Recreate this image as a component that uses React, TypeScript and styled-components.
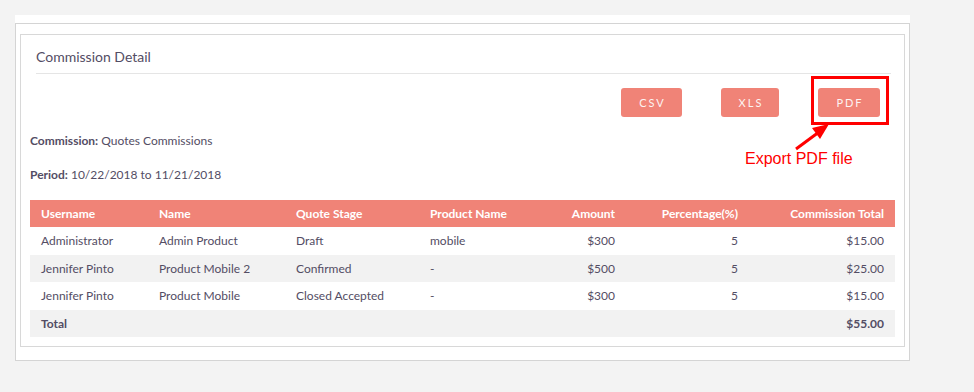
import styled, { createGlobalStyle } from 'styled-components';

const GlobalStyles = createGlobalStyle`
  html, body {
    margin: 0;
    padding: 0;
    background: #f3f3f3;
    font-family: Lato, "Open Sans", sans-serif;
    color: #534d64;
  }
`;

const Page = styled.div`
  padding: 15px 0 0 15px;
`;

const Sheet = styled.div`
  width: 895px;
  background: #fff;
  padding-top: 8px;
`;

const Outer = styled.div`
  border: 1px solid #d4d4d4;
  padding: 10px 4px 13px 4px;
`;

const Panel = styled.div`
  border: 1px solid #d8d8d8;
  padding: 0 8px 9px 9px;
  background: #fff;
`;

const Title = styled.h2`
  margin: 0 5px 0 6px;
  padding: 12px 0 6px;
  font-size: 14px;
  line-height: 20px;
  font-weight: 400;
  color: #534d64;
  border-bottom: 1px solid #e5e5e5;
`;

const Toolbar = styled.div`
  display: flex;
  justify-content: flex-end;
  gap: 39px;
  margin-top: 14px;
  padding-right: 16px;
`;

const ExportButton = styled.button<{ $w: number }>`
  position: relative;
  width: ${(p) => p.$w}px;
  height: 29px;
  border: none;
  border-radius: 3px;
  background: #f08377;
  color: #fdf3f2;
  font-family: Lato, sans-serif;
  font-size: 11px;
  font-weight: 400;
  letter-spacing: 2px;
  padding: 0 0 0 2px;
  cursor: pointer;
`;

const Highlight = styled.span`
  position: absolute;
  left: -7px;
  top: -12px;
  right: -9px;
  bottom: -8px;
  border: 3px solid #ff0000;
  pointer-events: none;
`;

const Callout = styled.div`
  position: absolute;
  left: -73px;
  top: 36px;
  width: 140px;
  height: 52px;
  pointer-events: none;
`;

const CalloutText = styled.span`
  position: absolute;
  left: 0;
  top: 26px;
  font-family: "Liberation Sans", Arial, sans-serif;
  font-size: 16px;
  letter-spacing: 0;
  color: #f00;
  white-space: nowrap;
`;

const Info = styled.p<{ $top: number }>`
  margin: ${(p) => p.$top}px 0 0;
  font-size: 12px;
  line-height: 20px;
  color: #534d64;
  b {
    font-weight: 700;
  }
`;

const Table = styled.table`
  width: 865px;
  margin-top: 15px;
  border-collapse: collapse;
  table-layout: fixed;
  font-size: 12px;
`;

const Th = styled.th<{ $right?: boolean }>`
  height: 27px;
  padding: 0 11px;
  background: #f08377;
  color: #fff;
  font-weight: 700;
  text-align: ${(p) => (p.$right ? 'right' : 'left')};
`;

const Row = styled.tr<{ $striped?: boolean }>`
  background: ${(p) => (p.$striped ? '#f2f2f2' : '#fff')};
`;

const Td = styled.td<{ $right?: boolean; $bold?: boolean }>`
  height: 27.5px;
  padding: 0 11px;
  color: #534d64;
  font-weight: ${(p) => (p.$bold ? 700 : 400)};
  text-align: ${(p) => (p.$right ? 'right' : 'left')};
  white-space: nowrap;
`;

const columns = [
  { label: 'Username', width: 118 },
  { label: 'Name', width: 137 },
  { label: 'Quote Stage', width: 134 },
  { label: 'Product Name', width: 107 },
  { label: 'Amount', width: 100, right: true },
  { label: 'Percentage(%)', width: 123, right: true },
  { label: 'Commission Total', width: 146, right: true },
];

const rows = [
  ['Administrator', 'Admin Product', 'Draft', 'mobile', '$300', '5', '$15.00'],
  ['Jennifer Pinto', 'Product Mobile 2', 'Confirmed', '-', '$500', '5', '$25.00'],
  ['Jennifer Pinto', 'Product Mobile', 'Closed Accepted', '-', '$300', '5', '$15.00'],
];

export default function App() {
  return (
    <>
      <GlobalStyles />
      <Page>
        <Sheet>
          <Outer>
            <Panel>
              <Title>Commission Detail</Title>
              <Toolbar>
                <ExportButton $w={61}>CSV</ExportButton>
                <ExportButton $w={58}>XLS</ExportButton>
                <ExportButton $w={62}>
                  PDF
                  <Highlight />
                  <Callout>
                    <svg width="140" height="30" viewBox="0 0 140 30" style={{ position: 'absolute', left: 0, top: 0 }}>
                      <line x1="51" y1="25" x2="74" y2="8" stroke="#f00" strokeWidth="3" />
                      <polygon points="84,0 67,4 75,15" fill="#f00" />
                    </svg>
                    <CalloutText>Export PDF file</CalloutText>
                  </Callout>
                </ExportButton>
              </Toolbar>
              <Info $top={14}>
                <b>Commission:</b> Quotes Commissions
              </Info>
              <Info $top={14}>
                <b>Period:</b> 10/22/2018 to 11/21/2018
              </Info>
              <Table>
                <colgroup>
                  {columns.map((c) => (
                    <col key={c.label} style={{ width: c.width }} />
                  ))}
                </colgroup>
                <thead>
                  <tr>
                    {columns.map((c) => (
                      <Th key={c.label} $right={c.right}>
                        {c.label}
                      </Th>
                    ))}
                  </tr>
                </thead>
                <tbody>
                  {rows.map((r, i) => (
                    <Row key={i} $striped={i % 2 === 1}>
                      {r.map((cell, j) => (
                        <Td key={j} $right={columns[j].right}>
                          {cell}
                        </Td>
                      ))}
                    </Row>
                  ))}
                  <Row $striped>
                    <Td $bold>Total</Td>
                    <Td />
                    <Td />
                    <Td />
                    <Td />
                    <Td />
                    <Td $right $bold>
                      $55.00
                    </Td>
                  </Row>
                </tbody>
              </Table>
            </Panel>
          </Outer>
        </Sheet>
      </Page>
    </>
  );
}
